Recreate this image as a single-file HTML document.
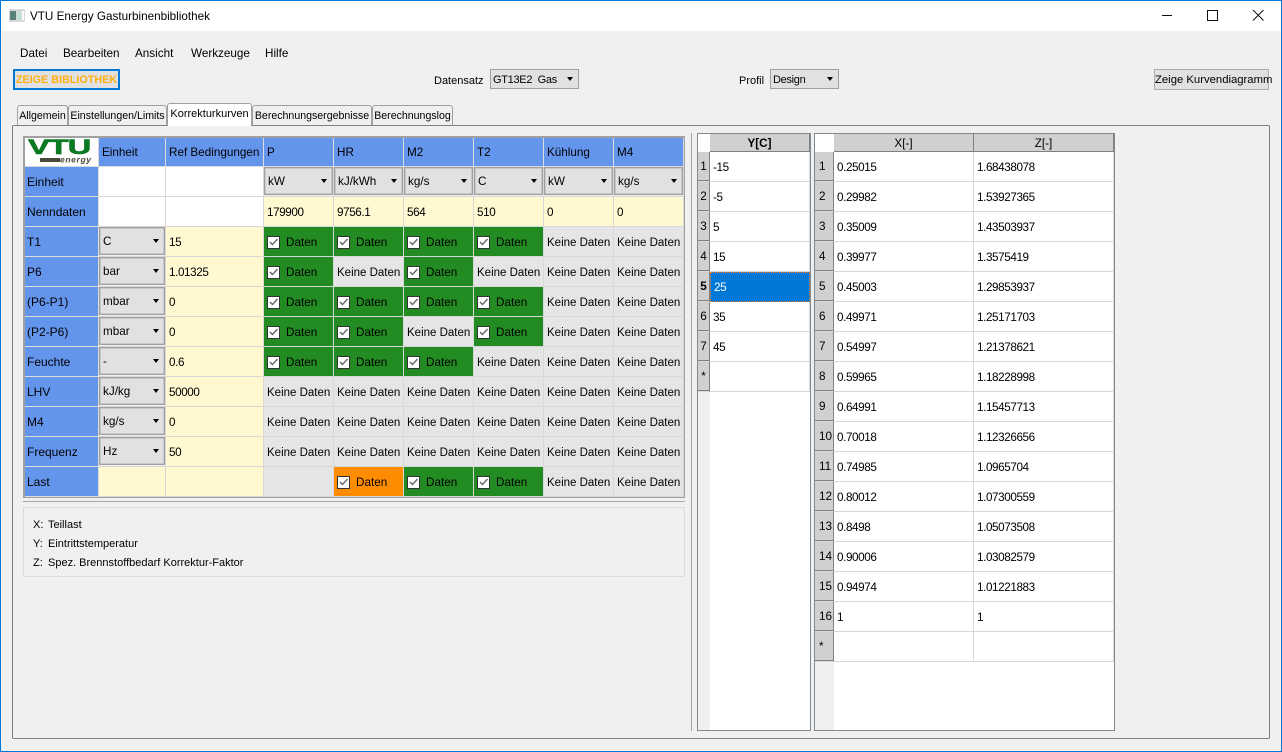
<!DOCTYPE html>
<html lang="de"><head><meta charset="utf-8"><title>VTU Energy Gasturbinenbibliothek</title>
<style>
*{box-sizing:border-box}
html,body{margin:0;padding:0;width:1282px;height:752px;overflow:hidden;background:#f0f0f0}
body{font:11.700px/16px "Liberation Sans",Arial,sans-serif;color:#000;position:relative}
.a{position:absolute;white-space:nowrap}
table{border-collapse:separate;border-spacing:0;table-layout:fixed;position:absolute}
td,th{padding:2px 0 0 3px;height:30px;font-weight:normal;text-align:left;white-space:nowrap;overflow:hidden;border-right:1px solid #d8d8d8;border-bottom:1px solid #d8d8d8;vertical-align:top;background:#fff;line-height:27px}
#m tr:first-child td{height:29px;line-height:26px}
#m td:first-child{font-size:12px;padding-left:2px}
#m .h{background:#6495ed;border-color:#dcdcdc}
#m .y{background:#fff8d0;letter-spacing:-.4px}
#m .k{background:#e5e5e5;font-size:11.500px;padding-top:3px;line-height:26px}
#m .g{background:#228b22;position:relative}
#m .o{background:#ff8c00;position:relative}
#m .b{padding:0;background:#f0f0f0}
.cb{display:block;height:28px;margin:0;border:1px solid #a0a0a0;outline:0;background:#e1e1e1;line-height:28px;padding-left:3px;position:relative;box-shadow:inset 0 0 0 .5px #b0b0b0}
.cb:after,.s:after{content:"";position:absolute;border-left:3.500px solid transparent;border-right:3.500px solid transparent;border-top:4px solid #000;right:5px;top:11px}
.s:after{top:7px}
.c{display:inline-block;width:13px;height:13px;background:#fff;border:1px solid #333;position:absolute;left:3px;top:9px}
.c:after{content:"";position:absolute;left:0;top:0;width:11px;height:11px;background:#666;clip-path:polygon(1.500px 5.500px,2.500px 4.500px,4.500px 6.500px,9px 1.500px,10px 2.500px,4.500px 8.500px)}
.g b,.o b{font-weight:normal;position:absolute;left:22px;top:2px}
.s{position:absolute;border:1px solid #a0a0a0;background:#e1e1e1;height:20px;line-height:20px;padding-left:2px;font-size:11px;letter-spacing:-.3px}
.btn{position:absolute;background:#e1e1e1;border:1px solid #adadad;text-align:center}
.tab{position:absolute;border:1px solid #a0a0a0;border-bottom:0;border-radius:3px 3px 0 0;background:#f0f0f0;height:20px;top:105px;font-size:10.600px;line-height:21px;text-align:center;white-space:nowrap;overflow:hidden}
.rt{position:absolute;top:133px;background:#fff;border:1px solid #808890}
.rt td,.rt th{padding:0;border-right:1px solid #d8d8d8;line-height:27px}
.rt td.v{padding:2px 0 0 3px;letter-spacing:-.4px}
.rt td.r{background:#d0d0d0;text-align:center;border-right:1px solid #808080;border-bottom:1px solid #d8d8d8;box-shadow:inset 0 -1px 0 #808080;padding-top:1px}
.rt td.l{text-align:left;padding-left:4px}
.rt tr td{height:30px}
.rt tr:first-child>*{height:18px;line-height:15px;padding-top:2px}
.rt th{background:#d0d0d0;text-align:center;border-right:1px solid #808080;border-bottom:1px solid #808080}
.rt th.e{background:#fff;border:0}
.rt td.sel{background:#0078d7;color:#fff;border:1px dotted #f08020;padding:1px 0 0 3px;letter-spacing:-.4px}
.strip{position:absolute;background:#f0f0f0}
</style></head><body>
<div class="a" style="left:0;top:0;width:1282px;height:752px;border:1px solid #0078d7;z-index:9;pointer-events:none"></div>
<div class="a" style="left:1px;top:1px;width:1280px;height:30px;background:#fff"></div>
<svg class="a" style="left:9px;top:9px" width="16" height="13" viewBox="0 0 16 13"><rect x="0" y="0" width="16" height="13" fill="#d8d8d8"/><rect x="1" y="2" width="6" height="9" fill="#5a7f78"/><rect x="8" y="2" width="4" height="9" fill="#bfe0d0"/><rect x="13" y="2" width="2" height="9" fill="#fff"/></svg>
<div class="a" style="left:30px;top:9px">VTU Energy Gasturbinenbibliothek</div>
<svg class="a" style="left:1155px;top:5px" width="120" height="22" viewBox="0 0 120 22" fill="none" stroke="#111" stroke-width="1"><path d="M7 10.500H17"/><path d="M52.500 5.500h10v10h-10z"/><path d="M98 5l10.500 10.500M108.500 5L98 15.500"/></svg>
<div class="a" style="left:20px;top:46px">Datei</div>
<div class="a" style="left:63px;top:46px">Bearbeiten</div>
<div class="a" style="left:135px;top:46px">Ansicht</div>
<div class="a" style="left:191px;top:46px">Werkzeuge</div>
<div class="a" style="left:265px;top:46px">Hilfe</div>
<div class="btn" style="left:13px;top:69px;width:107px;height:21px;border:2px solid #0078d7;color:#ffae12;font-weight:bold;font-size:10.800px;line-height:19px;white-space:nowrap">ZEIGE BIBLIOTHEK</div>
<div class="a" style="left:434px;top:73px;font-size:11px">Datensatz</div>
<div class="s" style="left:490px;top:69px;width:89px">GT13E2 &nbsp;Gas</div>
<div class="a" style="left:739px;top:73px;font-size:11px">Profil</div>
<div class="s" style="left:770px;top:69px;width:69px">Design</div>
<div class="btn" style="left:1154px;top:69px;width:115px;height:21px;font-size:11.300px;line-height:20px;white-space:nowrap">Zeige Kurvendiagramm</div>

<div class="a" style="left:12px;top:125px;width:1258px;height:614px;border:1px solid #808080;border-radius:2px"></div>
<div class="tab" style="left:17px;width:51px">Allgemein</div>
<div class="tab" style="left:68px;width:99px">Einstellungen/Limits</div>
<div class="tab" style="left:252px;width:120px">Berechnungsergebnisse</div>
<div class="tab" style="left:372px;width:81px">Berechnungslog</div>
<div class="tab" style="left:167px;width:85px;top:103px;height:23px;background:#fff;line-height:21px;font-size:11px">Korrekturkurven</div>

<div class="a" style="left:23px;top:136px;width:662px;height:362px;border:2px solid #a0a0a0;border-right-width:1px;border-bottom-width:1px;background:#f0f0f0"></div>
<table id="m" style="left:25px;top:138px;width:659px">
<colgroup><col style="width:74px"><col style="width:67px"><col style="width:98px"><col style="width:70px"><col style="width:70px"><col style="width:70px"><col style="width:70px"><col style="width:70px"><col style="width:70px"></colgroup>
<tr><td style="padding:0;position:relative"><svg class="a" style="left:0;top:0" width="73" height="28" viewBox="0 0 73 28"><text transform="translate(3,16) scale(1.55,1)" font-family="Liberation Sans" font-weight="bold" font-size="21" fill="#0b7a22" stroke="#0b7a22" stroke-width=".6" letter-spacing="-.6">VTU</text><rect x="15" y="20" width="20" height="4" fill="#4a4a3a"/><text x="35" y="24.500" font-family="Liberation Sans" font-weight="bold" font-style="italic" font-size="8.500" fill="#4a4a3a" textLength="31">energy</text></svg></td><td class="h">Einheit</td><td class="h">Ref Bedingungen</td><td class="h">P</td><td class="h">HR</td><td class="h">M2</td><td class="h">T2</td><td class="h">Kühlung</td><td class="h">M4</td></tr>
<tr><td class="h">Einheit</td><td></td><td></td><td class="b"><span class="cb">kW</span></td><td class="b"><span class="cb">kJ/kWh</span></td><td class="b"><span class="cb">kg/s</span></td><td class="b"><span class="cb">C</span></td><td class="b"><span class="cb">kW</span></td><td class="b"><span class="cb">kg/s</span></td></tr>
<tr><td class="h">Nenndaten</td><td></td><td></td><td class="y">179900</td><td class="y">9756.1</td><td class="y">564</td><td class="y">510</td><td class="y">0</td><td class="y">0</td></tr>
<tr><td class="h">T1</td><td class="b"><span class="cb">C</span></td><td class="y">15</td><td class="g"><i class="c"></i><b>Daten</b></td><td class="g"><i class="c"></i><b>Daten</b></td><td class="g"><i class="c"></i><b>Daten</b></td><td class="g"><i class="c"></i><b>Daten</b></td><td class="k">Keine Daten</td><td class="k">Keine Daten</td></tr>
<tr><td class="h">P6</td><td class="b"><span class="cb">bar</span></td><td class="y">1.01325</td><td class="g"><i class="c"></i><b>Daten</b></td><td class="k">Keine Daten</td><td class="g"><i class="c"></i><b>Daten</b></td><td class="k">Keine Daten</td><td class="k">Keine Daten</td><td class="k">Keine Daten</td></tr>
<tr><td class="h">(P6-P1)</td><td class="b"><span class="cb">mbar</span></td><td class="y">0</td><td class="g"><i class="c"></i><b>Daten</b></td><td class="g"><i class="c"></i><b>Daten</b></td><td class="g"><i class="c"></i><b>Daten</b></td><td class="g"><i class="c"></i><b>Daten</b></td><td class="k">Keine Daten</td><td class="k">Keine Daten</td></tr>
<tr><td class="h">(P2-P6)</td><td class="b"><span class="cb">mbar</span></td><td class="y">0</td><td class="g"><i class="c"></i><b>Daten</b></td><td class="g"><i class="c"></i><b>Daten</b></td><td class="k">Keine Daten</td><td class="g"><i class="c"></i><b>Daten</b></td><td class="k">Keine Daten</td><td class="k">Keine Daten</td></tr>
<tr><td class="h">Feuchte</td><td class="b"><span class="cb">-</span></td><td class="y">0.6</td><td class="g"><i class="c"></i><b>Daten</b></td><td class="g"><i class="c"></i><b>Daten</b></td><td class="g"><i class="c"></i><b>Daten</b></td><td class="k">Keine Daten</td><td class="k">Keine Daten</td><td class="k">Keine Daten</td></tr>
<tr><td class="h">LHV</td><td class="b"><span class="cb">kJ/kg</span></td><td class="y">50000</td><td class="k">Keine Daten</td><td class="k">Keine Daten</td><td class="k">Keine Daten</td><td class="k">Keine Daten</td><td class="k">Keine Daten</td><td class="k">Keine Daten</td></tr>
<tr><td class="h">M4</td><td class="b"><span class="cb">kg/s</span></td><td class="y">0</td><td class="k">Keine Daten</td><td class="k">Keine Daten</td><td class="k">Keine Daten</td><td class="k">Keine Daten</td><td class="k">Keine Daten</td><td class="k">Keine Daten</td></tr>
<tr><td class="h">Frequenz</td><td class="b"><span class="cb">Hz</span></td><td class="y">50</td><td class="k">Keine Daten</td><td class="k">Keine Daten</td><td class="k">Keine Daten</td><td class="k">Keine Daten</td><td class="k">Keine Daten</td><td class="k">Keine Daten</td></tr>
<tr><td class="h">Last</td><td class="y"></td><td class="y"></td><td class="k"></td><td class="o"><i class="c"></i><b>Daten</b></td><td class="g"><i class="c"></i><b>Daten</b></td><td class="g"><i class="c"></i><b>Daten</b></td><td class="k">Keine Daten</td><td class="k">Keine Daten</td></tr>
</table>
<div class="a" style="left:23px;top:501px;width:662px;height:1px;background:#a8a8a8"></div>
<div class="a" style="left:23px;top:507px;width:662px;height:70px;border:1px solid #dcdcdc"></div>
<div class="a" style="left:33px;top:517px;font-size:11px">X:</div><div class="a" style="left:48px;top:517px;font-size:11px">Teillast</div>
<div class="a" style="left:33px;top:536px;font-size:11px">Y:</div><div class="a" style="left:48px;top:536px;font-size:11px">Eintrittstemperatur</div>
<div class="a" style="left:33px;top:555px;font-size:11px">Z:</div><div class="a" style="left:48px;top:555px;font-size:11px">Spez. Brennstoffbedarf Korrektur-Faktor</div>

<div class="a" style="left:691px;top:133px;width:1px;height:598px;background:#a0a0a0"></div>

<div class="rt" style="left:697px;width:114px;height:598px">
<div class="strip" style="left:0;top:258px;width:12px;height:338px"></div>
<table style="left:0;top:0;width:112px"><colgroup><col style="width:12px"><col style="width:100px"></colgroup>
<tr><th class="e"></th><th style="font-weight:bold">Y[C]</th></tr>
<tr><td class="r">1</td><td class="v">-15</td></tr>
<tr><td class="r">2</td><td class="v">-5</td></tr>
<tr><td class="r">3</td><td class="v">5</td></tr>
<tr><td class="r">4</td><td class="v">15</td></tr>
<tr><td class="r" style="font-weight:bold">5</td><td class="sel">25</td></tr>
<tr><td class="r">6</td><td class="v">35</td></tr>
<tr><td class="r">7</td><td class="v">45</td></tr>
<tr><td class="r">*</td><td class="v"></td></tr>
</table></div>

<div class="rt" style="left:814px;width:301px;height:598px">
<div class="strip" style="left:0;top:528px;width:19px;height:68px"></div>
<table style="left:0;top:0;width:299px"><colgroup><col style="width:19px"><col style="width:140px"><col style="width:140px"></colgroup>
<tr><th class="e"></th><th>X[-]</th><th>Z[-]</th></tr>
<tr><td class="r l">1</td><td class="v">0.25015</td><td class="v">1.68438078</td></tr>
<tr><td class="r l">2</td><td class="v">0.29982</td><td class="v">1.53927365</td></tr>
<tr><td class="r l">3</td><td class="v">0.35009</td><td class="v">1.43503937</td></tr>
<tr><td class="r l">4</td><td class="v">0.39977</td><td class="v">1.3575419</td></tr>
<tr><td class="r l">5</td><td class="v">0.45003</td><td class="v">1.29853937</td></tr>
<tr><td class="r l">6</td><td class="v">0.49971</td><td class="v">1.25171703</td></tr>
<tr><td class="r l">7</td><td class="v">0.54997</td><td class="v">1.21378621</td></tr>
<tr><td class="r l">8</td><td class="v">0.59965</td><td class="v">1.18228998</td></tr>
<tr><td class="r l">9</td><td class="v">0.64991</td><td class="v">1.15457713</td></tr>
<tr><td class="r l">10</td><td class="v">0.70018</td><td class="v">1.12326656</td></tr>
<tr><td class="r l">11</td><td class="v">0.74985</td><td class="v">1.0965704</td></tr>
<tr><td class="r l">12</td><td class="v">0.80012</td><td class="v">1.07300559</td></tr>
<tr><td class="r l">13</td><td class="v">0.8498</td><td class="v">1.05073508</td></tr>
<tr><td class="r l">14</td><td class="v">0.90006</td><td class="v">1.03082579</td></tr>
<tr><td class="r l">15</td><td class="v">0.94974</td><td class="v">1.01221883</td></tr>
<tr><td class="r l">16</td><td class="v">1</td><td class="v">1</td></tr>
<tr><td class="r l">*</td><td class="v"></td><td class="v"></td></tr>
</table></div>
</body></html>
